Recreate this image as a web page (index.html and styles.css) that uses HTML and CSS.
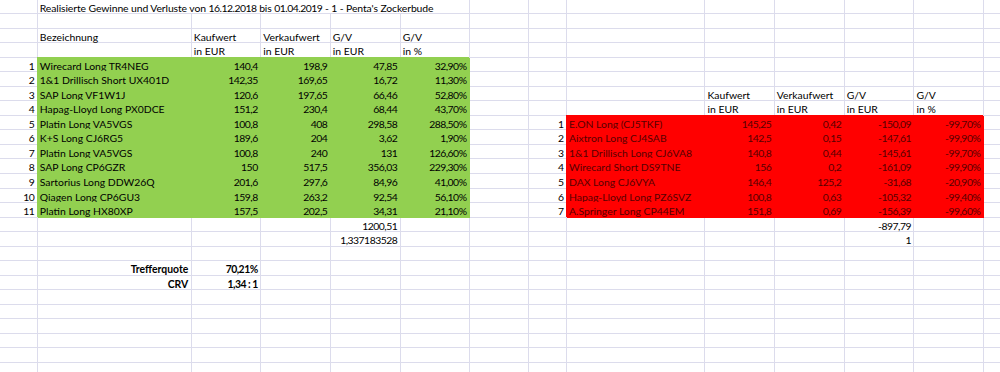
FILE: index.html
```html
<!DOCTYPE html>
<html lang="de">
<head>
<meta charset="utf-8">
<title>Realisierte Gewinne und Verluste</title>
<link rel="stylesheet" href="styles.css">
</head>
<body>
<div class="sheet">
<!-- row 0 -->
<div></div><div class="title">Realisierte Gewinne und Verluste von <span class="n">16.12.2018</span> bis <span class="n">01.04.2019</span> - 1 - Penta's Zockerbude</div><div></div><div></div><div></div><div></div><div></div><div></div><div></div><div></div>
<!-- row 1 -->
<div></div><div></div><div></div><div></div><div></div><div></div><div></div><div></div><div></div><div></div><div></div><div></div><div></div><div></div>
<!-- row 2 -->
<div></div><div>Bezeichnung</div><div>Kaufwert</div><div>Verkaufwert</div><div>G/V</div><div>G/V</div><div></div><div></div><div></div><div></div><div></div><div></div><div></div><div></div>
<!-- row 3 -->
<div></div><div></div><div>in EUR</div><div>in EUR</div><div>in EUR</div><div>in %</div><div></div><div></div><div></div><div></div><div></div><div></div><div></div><div></div>
<!-- row 4 -->
<div class="r">1</div><div class="g">Wirecard Long TR4NEG</div><div class="g r">140,4</div><div class="g r">198,9</div><div class="g r">47,85</div><div class="g r">32,90%</div><div></div><div></div><div></div><div></div><div></div><div></div><div></div><div></div>
<!-- row 5 -->
<div class="r">2</div><div class="g">1&amp;1 Drillisch Short UX401D</div><div class="g r">142,35</div><div class="g r">169,65</div><div class="g r">16,72</div><div class="g r">11,30%</div><div></div><div></div><div></div><div></div><div></div><div></div><div></div><div></div>
<!-- row 6 -->
<div class="r">3</div><div class="g">SAP Long VF1W1J</div><div class="g r">120,6</div><div class="g r">197,65</div><div class="g r">66,46</div><div class="g r">52,80%</div><div></div><div></div><div></div><div>Kaufwert</div><div>Verkaufwert</div><div>G/V</div><div>G/V</div><div></div>
<!-- row 7 -->
<div class="r">4</div><div class="g">Hapag-Lloyd Long PX0DCE</div><div class="g r">151,2</div><div class="g r">230,4</div><div class="g r">68,44</div><div class="g r">43,70%</div><div></div><div></div><div></div><div>in EUR</div><div>in EUR</div><div>in EUR</div><div>in %</div><div></div>
<!-- row 8 -->
<div class="r">5</div><div class="g">Platin Long VA5VGS</div><div class="g r">100,8</div><div class="g r">408</div><div class="g r">298,58</div><div class="g r">288,50%</div><div></div><div class="r">1</div><div class="x">E.ON Long (CJ5TKF)</div><div class="x r">145,25</div><div class="x r">0,42</div><div class="x r">-150,09</div><div class="x r">-99,70%</div><div></div>
<!-- row 9 -->
<div class="r">6</div><div class="g">K+S Long CJ6RG5</div><div class="g r">189,6</div><div class="g r">204</div><div class="g r">3,62</div><div class="g r">1,90%</div><div></div><div class="r">2</div><div class="x">Aixtron Long CJ4SAB</div><div class="x r">142,5</div><div class="x r">0,15</div><div class="x r">-147,61</div><div class="x r">-99,90%</div><div></div>
<!-- row 10 -->
<div class="r">7</div><div class="g">Platin Long VA5VGS</div><div class="g r">100,8</div><div class="g r">240</div><div class="g r">131</div><div class="g r">126,60%</div><div></div><div class="r">3</div><div class="x">1&amp;1 Drillisch Long CJ6VA8</div><div class="x r">140,8</div><div class="x r">0,44</div><div class="x r">-145,61</div><div class="x r">-99,70%</div><div></div>
<!-- row 11 -->
<div class="r">8</div><div class="g">SAP Long CP6GZR</div><div class="g r">150</div><div class="g r">517,5</div><div class="g r">356,03</div><div class="g r">229,30%</div><div></div><div class="r">4</div><div class="x">Wirecard Short DS9TNE</div><div class="x r">156</div><div class="x r">0,2</div><div class="x r">-161,09</div><div class="x r">-99,90%</div><div></div>
<!-- row 12 -->
<div class="r">9</div><div class="g">Sartorius Long DDW26Q</div><div class="g r">201,6</div><div class="g r">297,6</div><div class="g r">84,96</div><div class="g r">41,00%</div><div></div><div class="r">5</div><div class="x">DAX Long CJ6VYA</div><div class="x r">146,4</div><div class="x r">125,2</div><div class="x r">-31,68</div><div class="x r">-20,90%</div><div></div>
<!-- row 13 -->
<div class="r">10</div><div class="g">Qiagen Long CP6GU3</div><div class="g r">159,8</div><div class="g r">263,2</div><div class="g r">92,54</div><div class="g r">56,10%</div><div></div><div class="r">6</div><div class="x">Hapag-Lloyd Long PZ6SVZ</div><div class="x r">100,8</div><div class="x r">0,63</div><div class="x r">-105,32</div><div class="x r">-99,40%</div><div></div>
<!-- row 14 -->
<div class="r">11</div><div class="g">Platin Long HX80XP</div><div class="g r">157,5</div><div class="g r">202,5</div><div class="g r">34,31</div><div class="g r">21,10%</div><div></div><div class="r">7</div><div class="x">A.Springer Long CP44EM</div><div class="x r">151,8</div><div class="x r">0,69</div><div class="x r">-156,39</div><div class="x r">-99,60%</div><div></div>
<!-- row 15 -->
<div></div><div></div><div></div><div></div><div class="r">1200,51</div><div></div><div></div><div></div><div></div><div></div><div></div><div class="r">-897,79</div><div></div><div></div>
<!-- row 16 -->
<div></div><div></div><div></div><div></div><div class="r">1,337183528</div><div></div><div></div><div></div><div></div><div></div><div></div><div class="r">1</div><div></div><div></div>
<!-- row 17 -->
<div></div><div></div><div></div><div></div><div></div><div></div><div></div><div></div><div></div><div></div><div></div><div></div><div></div><div></div>
<!-- row 18 -->
<div></div><div class="r b t">Trefferquote</div><div class="r b">70,21%</div><div></div><div></div><div></div><div></div><div></div><div></div><div></div><div></div><div></div><div></div><div></div>
<!-- row 19 -->
<div></div><div class="r b t">CRV</div><div class="r b">1,34 : 1</div><div></div><div></div><div></div><div></div><div></div><div></div><div></div><div></div><div></div><div></div><div></div>
<!-- rows 20-25 -->
<div></div><div></div><div></div><div></div><div></div><div></div><div></div><div></div><div></div><div></div><div></div><div></div><div></div><div></div>
<div></div><div></div><div></div><div></div><div></div><div></div><div></div><div></div><div></div><div></div><div></div><div></div><div></div><div></div>
<div></div><div></div><div></div><div></div><div></div><div></div><div></div><div></div><div></div><div></div><div></div><div></div><div></div><div></div>
<div></div><div></div><div></div><div></div><div></div><div></div><div></div><div></div><div></div><div></div><div></div><div></div><div></div><div></div>
<div></div><div></div><div></div><div></div><div></div><div></div><div></div><div></div><div></div><div></div><div></div><div></div><div></div><div></div>
<div></div><div></div><div></div><div></div><div></div><div></div><div></div><div></div><div></div><div></div><div></div><div></div><div></div><div></div>
</div>
</body>
</html>
```

FILE: styles.css
```css
html, body {
  margin: 0;
  padding: 0;
  background: #ffffff;
  overflow: hidden;
}

body {
  font-family: Lato, "Open Sans", "Liberation Sans", sans-serif;
  font-size: 10.4px;
  color: #000000;
}

.sheet {
  display: grid;
  grid-template-columns: 37.8px 154px 69.4px 69.6px 70px 69.2px 58.8px 38.2px 138.5px 69.3px 70px 69.7px 69.3px 100px;
  grid-auto-rows: 14.54px;
  margin-top: -0.4px;
  width: 1100px;
}

.sheet > div {
  box-sizing: border-box;
  border-right: 1px solid #dcdcec;
  border-bottom: 1px solid #dcdcec;
  padding: 1px 2px 0 2px;
  line-height: 14px;
  white-space: nowrap;
  overflow: visible;
}

.sheet > .title {
  grid-column: span 5;
  letter-spacing: -0.1px;
}

.n {
  letter-spacing: -0.5px;
}

.sheet > .r {
  text-align: right;
  padding-right: 2.5px;
  letter-spacing: -0.5px;
}

.sheet > .t {
  letter-spacing: 0;
}

.sheet > .b {
  font-weight: bold;
}

.sheet > .g {
  background: #92d050;
  border-color: #92d050;
  box-shadow: -1px -1px 0 #92d050;
}

.sheet > .x {
  background: #ff0000;
  border-color: #ff0000;
  box-shadow: -1px -1px 0 #ff0000;
  color: #560000;
}
```
